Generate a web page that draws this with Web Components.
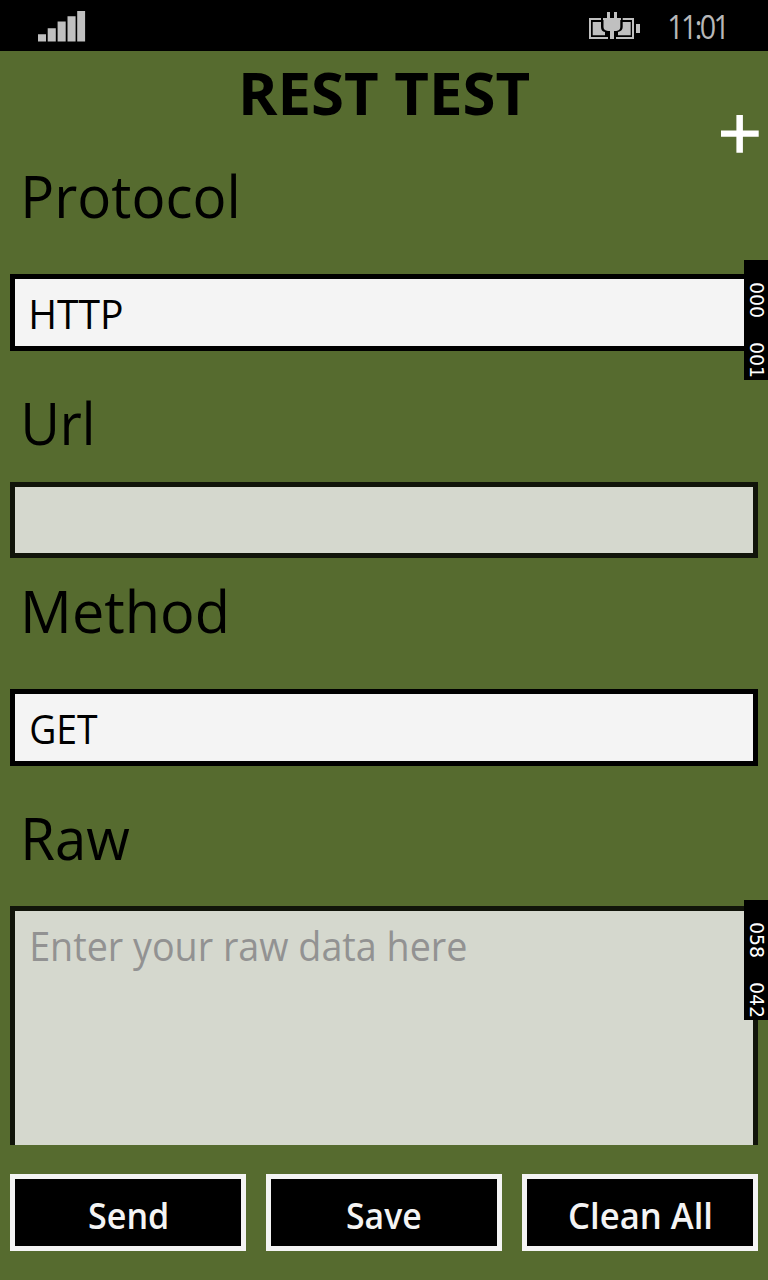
<!DOCTYPE html>
<html lang="en">
<head>
<meta charset="utf-8">
<title>REST TEST</title>
<style>
html,body{margin:0;padding:0;background:#566b2f}
body{width:768px;height:1280px;overflow:hidden;font-family:"Open Sans","Noto Sans",sans-serif;color:#000}
</style>
</head>
<body>
<rest-app></rest-app>
<script>
const define = (name, html, setup) => customElements.define(name, class extends HTMLElement {
  connectedCallback() {
    if (this.shadowRoot) return;
    const t = document.createElement('template');
    t.innerHTML = html;
    this.attachShadow({mode: 'open'}).appendChild(t.content.cloneNode(true));
    if (setup) setup(this, this.shadowRoot);
  }
});

/* Text fitted to a given ink width: size, weight, w (ink width), lh (line height), track (letter spacing). */
const ctx = document.createElement('canvas').getContext('2d');
define('fit-text', `
<style>
:host{display:block;flex:none;white-space:nowrap}
span{display:inline-block;transform-origin:0 0;vertical-align:top}
</style><span><slot></slot></span>`, (host, root) => {
  const size = +host.getAttribute('size'), weight = host.getAttribute('weight') || 400;
  const family = host.getAttribute('family') || 'Open Sans';
  const track = +(host.getAttribute('track') || 0), text = host.textContent.trim();
  const w = +host.getAttribute('w'), span = root.querySelector('span');
  host.style.width = w + 'px';
  host.style.height = host.style.lineHeight = host.getAttribute('lh') + 'px';
  host.style.fontSize = size + 'px';
  host.style.fontWeight = weight;
  host.style.fontFamily = `"${family}","Noto Sans",sans-serif`;
  host.style.letterSpacing = track + 'px';
  ctx.font = `${weight} ${size}px "${family}","Noto Sans",sans-serif`;
  const m = ctx.measureText(text);
  const k = w / (m.actualBoundingBoxRight + m.actualBoundingBoxLeft + track * (text.length - 1));
  span.style.transform = `translateX(${m.actualBoundingBoxLeft * k}px) scaleX(${k})`;
});

define('signal-icon', `
<style>:host{display:block}svg{display:block}</style>
<svg width="48" height="31" viewBox="38 11 48 31" fill="#c0c0c0"><path d="M38 34.2h8v7.3h-8zM47.7 28.2h8.1v13.3h-8.1zM57.6 21.4h8.1v20.1h-8.1zM67.5 16.3h8.1v25.2h-8.1zM77.2 11h7.9v30.5h-7.9z"/></svg>`);

define('battery-icon', `
<style>:host{display:block}svg{display:block}</style>
<svg width="52" height="28" viewBox="589 12 52 28" fill="#c0c0c0">
<path d="M589 18h12v2h-10v17h17v2h-19zM622.7 18H634v21h-18v-2h16V20h-9.3zM636 24h4v9h-4z"/>
<path d="M592.7 22H601v5q0 4.500 4 5v3.3h-12.3zM622.7 22h8v13.3H618V32q4.700-1 4.700-5z"/>
<path d="M607 12h3v6h4v-6h3v6h4v2h-.7v7q0 3.500-4 4H614V39h-4v-8h-2q-4.500-.5-4.500-4V20H603v-2h4z"/>
</svg>`);

define('status-bar', `
<style>
:host{display:flex;height:51px;background:#000;color:#c0c0c0;align-items:flex-start;box-sizing:border-box;padding:0 44px 0 38px}
signal-icon{margin-top:11px}
battery-icon{margin:12px 28px 0 auto}
fit-text{margin-top:1px;color:#b8b8b8}
</style>
<signal-icon></signal-icon><battery-icon></battery-icon>
<fit-text size="33" w="55" lh="52" track="-3">11:01</fit-text>`);

define('add-button', `
<style>:host{display:block}svg{display:block}</style>
<svg width="38" height="38" viewBox="0 0 38 38"><path fill="#fff" d="M15.400 0h6.500v15.400H37.700v6.400H21.900V37.700h-6.500V21.800H0v-6.400h15.400z"/></svg>`);

define('field-label', `
<style>:host{display:block;padding-left:25px;height:80px}</style><slot></slot>`);

define('form-box', `
<style>
:host{display:block;box-sizing:border-box;margin:0 10px;height:77px;border:5px solid #000;background:#f4f4f4;color:#000}
:host([dim]){border-color:#11140a;background:#d5d8ce;color:#929292}
</style><slot></slot>`);

define('app-button', `
<style>
:host{display:flex;box-sizing:border-box;height:77px;border:5px solid #f4f4f4;background:#000;color:#f4f4f4;justify-content:center}
</style><slot></slot>`);

/* Vertical frame-rate readout that lies over the page's right edge. */
define('frame-counter', `
<style>
:host{position:absolute;right:0;width:24px;height:120px;background:#000;color:#fff;box-sizing:border-box;padding-top:23px}
div{display:flex;gap:26px;width:95px;height:20px;transform-origin:0 0;transform:translateX(22.500px) rotate(90deg)}
</style><div><slot></slot></div>`);

define('rest-app', `
<style>
:host{display:flex;flex-direction:column;position:relative;width:768px;height:1280px;overflow:hidden;background:#566b2f}
header{display:flex;height:82px;padding-left:243px}
add-button{position:absolute;left:721px;top:115px}
main{height:1012px;overflow:hidden}
form-box fit-text{margin-left:17px}
footer{display:grid;grid-template-columns:repeat(3,1fr);gap:20px;padding:0 10px;margin-top:29px}
</style>
<status-bar></status-bar>
<header><fit-text size="59" weight="700" w="286" lh="82">REST TEST</fit-text></header>
<main>
<field-label style="margin-top:21px"><fit-text size="59" w="211" lh="82">Protocol</fit-text></field-label>
<form-box style="margin-top:40px"><fit-text size="41" w="90" lh="69">HTTP</fit-text></form-box>
<field-label style="margin-top:30px"><fit-text size="59" w="66" lh="82">Url</fit-text></field-label>
<form-box dim style="margin-top:21px;height:76px"></form-box>
<field-label style="margin-top:11px"><fit-text size="59" w="201" lh="82">Method</fit-text></field-label>
<form-box style="margin-top:40px"><fit-text size="41" w="67" lh="69" style="margin-left:15.500px">GET</fit-text></form-box>
<field-label style="margin-top:30px"><fit-text size="59" w="105" lh="82">Raw</fit-text></field-label>
<form-box dim style="margin-top:30px;height:260px"><fit-text size="40" w="434" lh="69">Enter your raw data here</fit-text></form-box>
</main>
<footer>
<app-button><fit-text size="36" weight="600" w="78" lh="73" style="margin-left:-1px">Send</fit-text></app-button>
<app-button><fit-text size="36" weight="600" w="74" lh="73">Save</fit-text></app-button>
<app-button><fit-text size="36" weight="600" w="141" lh="73">Clean All</fit-text></app-button>
</footer>
<add-button></add-button>
<frame-counter style="top:260px"><fit-text family="DejaVu Sans" size="19" w="34" lh="20">000</fit-text><fit-text family="DejaVu Sans" size="19" w="34" lh="20">001</fit-text></frame-counter>
<frame-counter style="top:900px"><fit-text family="DejaVu Sans" size="19" w="34" lh="20">058</fit-text><fit-text family="DejaVu Sans" size="19" w="34" lh="20">042</fit-text></frame-counter>`);
</script>
</body>
</html>
